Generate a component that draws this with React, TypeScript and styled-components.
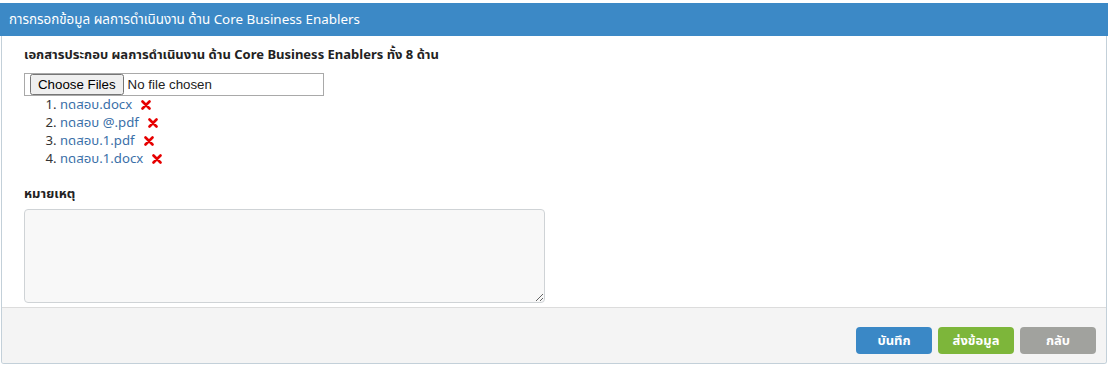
import React from "react";
import styled, { createGlobalStyle } from "styled-components";

const Global = createGlobalStyle`
  html, body { margin: 0; padding: 0; background: #ffffff; }
  body { font-family: "Noto Sans", "Noto Sans Thai", "DejaVu Sans", sans-serif; color: #222; }
`;

const Panel = styled.div`
  margin-top: 3px;
  width: 1108px;
`;

const Header = styled.div`
  background: #3c89c6;
  color: #ffffff;
  height: 33px;
  display: flex;
  align-items: center;
  padding: 0 9px;
  font-size: 13.4px;
  box-sizing: border-box;
`;

const Frame = styled.div`
  margin: 0 1px 0 1px;
  border: 1px solid #c3d0d9;
  border-top: none;
  border-radius: 0 0 3px 3px;
  overflow: hidden;
`;

const Body = styled.div`
  padding: 9px 22px 4px 22px;
  display: flex;
  flex-direction: column;
`;

const Label = styled.div`
  font-weight: 700;
  font-size: 13px;
  color: #222;
  line-height: 18px;
`;

const FileBox = styled.div`
  margin-top: 10px;
  width: 300px;
  height: 23px;
  border: 1px solid #a9a9a9;
  box-sizing: border-box;
  display: flex;
  align-items: center;
  padding-left: 5px;
`;

const FileInput = styled.input`
  font-family: "Liberation Sans", Arial, sans-serif;
  font-size: 13.3px;
  color: #222;
`;

const FileList = styled.ol`
  margin: -1px 0 0 0;
  padding-left: 36px;
  font-size: 13.2px;
  line-height: 18px;
`;

const FileItem = styled.li`
  color: #333;
`;

const FileLink = styled.a`
  color: #3a6fa8;
  text-decoration: none;
`;

const Remove = styled.span`
  display: inline-flex;
  margin-left: 9px;
  vertical-align: -1px;
`;

const NoteLabel = styled(Label)`
  margin-top: 17px;
`;

const NoteArea = styled.textarea`
  margin-top: 7px;
  width: 521px;
  height: 94px;
  box-sizing: border-box;
  background: #f8f8f8;
  border: 1px solid #cfd3d6;
  border-radius: 4px;
  resize: vertical;
`;

const Footer = styled.div`
  background: #f4f4f4;
  border-top: 1px solid #dcdcdc;
  height: 56px;
  box-sizing: border-box;
  display: flex;
  justify-content: flex-end;
  align-items: flex-start;
  gap: 6px;
  padding: 19px 10px 0 0;
`;

const Button = styled.button<{ $bg: string }>`
  width: 76px;
  height: 27px;
  border: none;
  border-radius: 4px;
  background: ${(p) => p.$bg};
  color: #ffffff;
  font-family: inherit;
  font-weight: 700;
  font-size: 13px;
  cursor: pointer;
`;

const Cross = () => (
  <svg width="10" height="10" viewBox="0 0 10 10">
    <path d="M1.5 1.5 L8.5 8.5 M8.5 1.5 L1.5 8.5" stroke="#e60000" strokeWidth="2.6" strokeLinecap="round" />
  </svg>
);

const files = ["ทดสอบ.docx", "ทดสอบ @.pdf", "ทดสอบ.1.pdf", "ทดสอบ.1.docx"];

export default function App() {
  return (
    <>
      <Global />
      <Panel>
        <Header>การกรอกข้อมูล ผลการดำเนินงาน ด้าน Core Business Enablers</Header>
        <Frame>
          <Body>
            <Label>เอกสารประกอบ ผลการดำเนินงาน ด้าน Core Business Enablers ทั้ง 8 ด้าน</Label>
            <FileBox>
              <FileInput type="file" multiple />
            </FileBox>
            <FileList>
              {files.map((f) => (
                <FileItem key={f}>
                  <FileLink href="#">{f}</FileLink>
                  <Remove>
                    <Cross />
                  </Remove>
                </FileItem>
              ))}
            </FileList>
            <NoteLabel>หมายเหตุ</NoteLabel>
            <NoteArea />
          </Body>
          <Footer>
            <Button $bg="#3a88c6">บันทึก</Button>
            <Button $bg="#7db63a">ส่งข้อมูล</Button>
            <Button $bg="#a1a29e">กลับ</Button>
          </Footer>
        </Frame>
      </Panel>
    </>
  );
}
